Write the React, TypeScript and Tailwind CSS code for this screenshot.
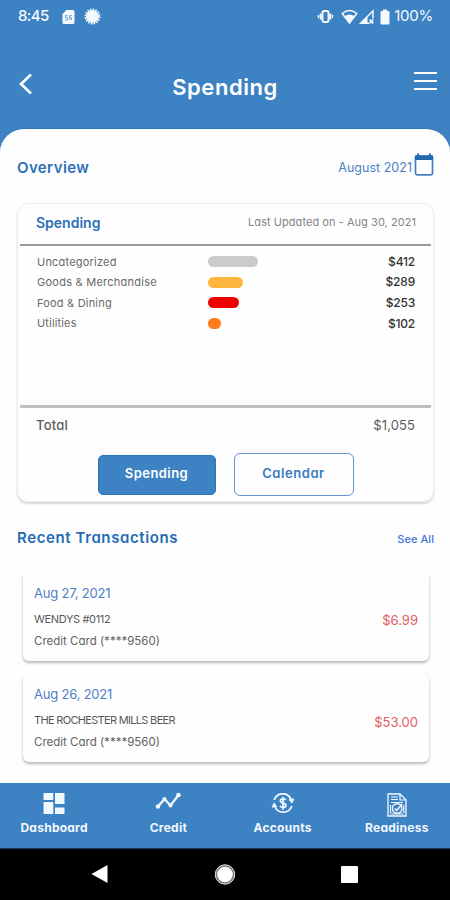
import type { ReactNode } from "react";

const categories = [
  { name: "Uncategorized", amount: "$412", width: 50, color: "bg-[#cbcbcb]", spacing: "tracking-[0.2px]" },
  { name: "Goods & Merchandise", amount: "$289", width: 35, color: "bg-[#ffb640]", spacing: "tracking-[0.25px]" },
  { name: "Food & Dining", amount: "$253", width: 31, color: "bg-[#ee0000]", spacing: "tracking-[0.2px]" },
  { name: "Utilities", amount: "$102", width: 12.5, color: "bg-[#ff7d1c]", spacing: "tracking-[0.15px]" },
];

const transactions = [
  { date: "Aug 27, 2021", merchant: "WENDYS #0112", amount: "$6.99", spacing: "tracking-[-0.350px]", dateSpacing: "tracking-[-0.2px]" },
  { date: "Aug 26, 2021", merchant: "THE ROCHESTER MILLS BEER", amount: "$53.00", spacing: "tracking-[-0.680px]", dateSpacing: "tracking-[-0.2px]" },
];

function StatusBar() {
  return (
    <div className="flex h-[33px] items-center pl-[18px] pr-[17px] text-[#f3f9ff]">
      <span className="w-[32px] text-[15px] font-medium tracking-[-0.6px]">8:45</span>
      <svg className="ml-[12px]" width="13" height="16" viewBox="0 0 13 16">
        <path d="M4.500 1H11a1.500 1.500 0 0 1 1.500 1.500v11A1.500 1.500 0 0 1 11 15H2a1.500 1.500 0 0 1-1.500-1.500V5z" fill="currentColor" />
        <path d="M5.500 6.500H3.500v2h1.800V11H3.200M9.700 6.500H7.700V11M8 8.800h1.500V11" stroke="#6a9dd0" strokeWidth="1" fill="none" />
      </svg>
      <svg className="ml-[9px]" width="17" height="17" viewBox="0 0 17 17">
        <circle cx="8.500" cy="8.500" r="6.500" fill="currentColor" />
        <circle cx="8.500" cy="8.500" r="7.100" fill="none" stroke="currentColor" strokeWidth="1.800" strokeDasharray="1.600 1.190" />
      </svg>
      <svg className="ml-auto" width="17" height="15" viewBox="0 0 17 15">
        <rect x="5.500" y="2" width="6" height="11" rx="1.800" fill="none" stroke="currentColor" strokeWidth="1.900" />
        <path d="M3.700 4.500v6M13.300 4.500v6" stroke="currentColor" strokeWidth="2" />
        <path d="M1.500 6v3M15.500 6v3" stroke="currentColor" strokeWidth="1.400" />
      </svg>
      <svg className="ml-[7px]" width="17" height="16" viewBox="0 0 17 16">
        <path d="M1.200 4.500Q8.500-1.500 15.800 4.500L8.500 14z" fill="none" stroke="currentColor" strokeWidth="1.500" />
        <path d="M3.500 7Q8.500 4 13.500 7L8.500 14z" fill="currentColor" />
      </svg>
      <svg className="ml-px" width="16" height="16" viewBox="0 0 16 16">
        <path d="M1.500 14.300 14 2v12.300z" fill="none" stroke="currentColor" strokeWidth="1.500" />
        <path d="M1 14.800 8.500 7.500v7.300z" fill="currentColor" />
        <path d="M10 9.500h6V16h-6z" fill="#3d82c3" />
        <path d="m10.500 10.500 3.800 3.800m0-3.800-3.800 3.800" stroke="currentColor" strokeWidth="1.700" />
      </svg>
      <svg className="ml-[5px]" width="10" height="16" viewBox="0 0 10 16">
        <path d="M3 .5h4V2h1.500a1 1 0 0 1 1 1v11.500a1 1 0 0 1-1 1h-7a1 1 0 0 1-1-1V3a1 1 0 0 1 1-1H3z" fill="currentColor" />
      </svg>
      <span className="ml-[4px] text-[15px] tracking-[-0.250px]">100%</span>
    </div>
  );
}

function Header() {
  return (
    <div className="grid h-[95px] grid-cols-[1fr_auto_1fr] px-[13px]">
      <svg className="mt-[39px] ml-[5px]" width="16" height="24" viewBox="0 0 16 24">
        <path d="M13 2.500 3 12l10 9.500" fill="none" stroke="white" strokeWidth="2.600" />
      </svg>
      <h1 className="mt-[39px] text-[22px] leading-[30px] font-semibold tracking-[0.550px] text-white">Spending</h1>
      <div className="mt-[39px] flex flex-col items-end gap-[6px]">
        <i className="h-[2px] w-[23px] bg-white" />
        <i className="h-[2px] w-[23px] bg-white" />
        <i className="h-[2px] w-[23px] bg-white" />
      </div>
    </div>
  );
}

function SpendingCard() {
  return (
    <section className="mr-[16px] ml-[17px] h-[299px] rounded-[11px] border border-[#ececec] px-[2px] shadow-[0_2px_2px_rgba(0,0,0,0.16)]">
      <div className="flex h-[42px] items-center justify-between border-b-2 border-[#9a9a9a] pr-[15px] pb-[4px] pl-4">
        <h3 className="text-[14px] font-semibold text-[#2b70b8]">Spending</h3>
        <span className="text-[11px] tracking-[0.05px] text-[#858585]">Last Updated on - Aug 30, 2021</span>
      </div>
      <div className="h-[159px] pt-[5.500px]">
        {categories.map((c) => (
          <div key={c.name} className="grid h-[20.600px] grid-cols-[171px_1fr_auto] items-center pr-4 pl-[17px]">
            <span className={`text-[11px] text-[#696969] ${c.spacing}`}>{c.name}</span>
            <span className={`h-[11px] rounded-full ${c.color}`} style={{ width: c.width }} />
            <span className="text-[12px] font-medium tracking-[-0.2px] text-[#333]">{c.amount}</span>
          </div>
        ))}
      </div>
      <div className="h-[3px] bg-[#bebebe]" />
      <div className="flex h-[35px] items-center justify-between pr-4 pl-4 text-[13px] text-[#5c5c5c]">
        <span className="font-medium tracking-[0.2px]">Total</span>
        <span className="tracking-[0.1px]">$1,055</span>
      </div>
      <div className="mt-[10px] flex items-center justify-center gap-[18px]">
        <button className="h-[40px] w-[118px] rounded-[5px] border border-[#2c74bc] bg-[#3d82c3] pb-[2px] text-[13px] font-semibold tracking-[0.450px] text-white">Spending</button>
        <button className="h-[43px] w-[120px] rounded-[6px] border border-[#6b93d0] pb-[2px] text-[13px] font-semibold tracking-[0.550px] text-[#397bc0]">Calendar</button>
      </div>
    </section>
  );
}

function NavItem({ label, children }: { label: string; children: ReactNode }) {
  return (
    <div className="flex flex-1 flex-col items-center">
      <div className="flex h-[34px] items-end justify-center">{children}</div>
      <span className="mt-[2px] text-[12px] leading-[17px] font-bold tracking-[0.250px]">{label}</span>
    </div>
  );
}

export default function App() {
  return (
    <div className="h-[900px] w-[450px] overflow-hidden bg-[#3d82c3] font-['Inter',sans-serif] [font-feature-settings:'cv11']">
      <StatusBar />
      <Header />
      <main className="h-[655px] bg-[linear-gradient(#3d82c3_19px,#fff_19px)]">
        <div className="h-[655px] rounded-t-[24px] border-t border-[#2f74b7] bg-[#fefefe]">
          <div className="flex h-[74px] justify-between pt-px pr-[16px] pl-[17px]">
            <h2 className="mt-[27px] text-[15px] leading-[22px] font-semibold tracking-[0.4px] text-[#2b70b8]">Overview</h2>
            <div className="mt-[23px] flex h-[26px] items-start gap-[2px]">
              <span className="mt-[4px] text-[12.500px] leading-[22px] tracking-[0.02px] text-[#4d7fc5]">August 2021</span>
              <svg width="20" height="24" viewBox="0 0 20 24">
                <rect x="1.500" y="3" width="17" height="18.800" rx="1.500" fill="none" stroke="#427fc0" strokeWidth="1.700" />
                <path d="M1 2.500h2V.5h2v2h10v-2h2v2h2V7H1z" fill="#2267ac" />
              </svg>
            </div>
          </div>
          <SpendingCard />
          <div className="flex h-[69px] items-start justify-between pr-[16px] pl-[17px]">
            <h2 className="mt-[25px] text-[15px] leading-[22px] font-semibold tracking-[0.6px] text-[#236bb3]">Recent Transactions</h2>
            <span className="mt-[26px] text-[11px] leading-[22px] font-medium tracking-[0.05px] text-[#3e75db]">See All</span>
          </div>
          <div className="flex flex-col gap-[12px] pr-[21px] pl-[23px]">
            {transactions.map((t) => (
              <article key={t.date} className="flex h-[89.500px] items-center justify-between rounded-[6px] bg-[#fefefe] pr-[11px] pl-[11px] shadow-[0_2px_3px_rgba(0,0,0,0.28)]">
                <div className="pt-[2px]">
                  <p className={`h-[26px] text-[13px] leading-[20px] text-[#4d80c8] ${t.dateSpacing}`}>{t.date}</p>
                  <p className={`h-[22px] text-[11px] leading-[20px] text-[#585858] ${t.spacing}`}>{t.merchant}</p>
                  <p className="text-[11.500px] leading-[20px] text-[#626262]">Credit Card (****9560)</p>
                </div>
                <span className="mt-[10px] text-[13px] text-[#e75a5e]">{t.amount}</span>
              </article>
            ))}
          </div>
        </div>
      </main>
      <nav className="-mr-[4px] -ml-[3px] flex h-[65px] text-[#f2f8ff]">
        <NavItem label="Dashboard">
          <svg width="22" height="24" viewBox="0 0 22 24">
            <path d="M.5 0h9.800v7H.5zM.5 9h9.800v12H.5zM12 0h9.500v11H12zM12 14.500h9.500V21H12z" fill="currentColor" />
          </svg>
        </NavItem>
        <NavItem label="Credit">
          <svg width="26" height="26" viewBox="0 0 26 26">
            <path d="m3 15.500 6.500-7.500 6 6.500L23.500 4" fill="none" stroke="currentColor" strokeWidth="2.200" />
            <g fill="currentColor"><circle cx="3" cy="15.500" r="2.300" /><circle cx="9.500" cy="8" r="2" /><circle cx="15.500" cy="14.500" r="2" /><circle cx="23.500" cy="4" r="2.300" /></g>
          </svg>
        </NavItem>
        <NavItem label="Accounts">
          <svg width="24" height="24" viewBox="0 0 24 24" fill="none" stroke="currentColor">
            <path d="M3.200 7A9 9 0 0 1 20.300 7M20.800 13A9 9 0 0 1 3.700 13" strokeWidth="1.700" />
            <path d="m18 6.500 5-.8-2 4.500zM6 13.500l-5 .8 2-4.500z" fill="currentColor" strokeWidth=".6" />
            <path d="M14.800 7c-1-1.700-5.400-1.500-5.400.9 0 2.900 5.500 1.500 5.500 4.500 0 2.500-4.800 2.500-5.900.5M12 3.700v13" strokeWidth="1.700" />
          </svg>
        </NavItem>
        <NavItem label="Readiness">
          <svg width="20" height="24" viewBox="0 0 20 24" fill="none" stroke="currentColor">
            <path d="M1 1h12l6 6v16H1z" strokeWidth="1.300" />
            <path d="M13 1v6h6M4 4h7M4 6.500h7M4 9.500h12M3.500 12v8M3.500 21h13M16.800 12v8" strokeWidth="1.200" />
            <circle cx="10.200" cy="15.500" r="4.800" strokeWidth="1.400" />
            <path d="m7.800 15.500 1.900 2 5.500-6.500" strokeWidth="1.500" />
          </svg>
        </NavItem>
      </nav>
      <footer className="flex h-[52px] justify-between border-t border-[#163e61] bg-black pt-[15px] pr-[92px] pl-[91px]">
        <svg width="18" height="20" viewBox="0 0 18 20"><path d="M.5 10 16.500 1v18z" fill="white" /></svg>
        <svg width="22" height="22" viewBox="0 0 22 22"><circle cx="11" cy="10.500" r="9.700" fill="#777" stroke="#eee" /><circle cx="11" cy="10.500" r="7.800" fill="white" /></svg>
        <i className="mt-[2px] h-[17px] w-[17px] rounded-[1px] bg-white" />
      </footer>
    </div>
  );
}
